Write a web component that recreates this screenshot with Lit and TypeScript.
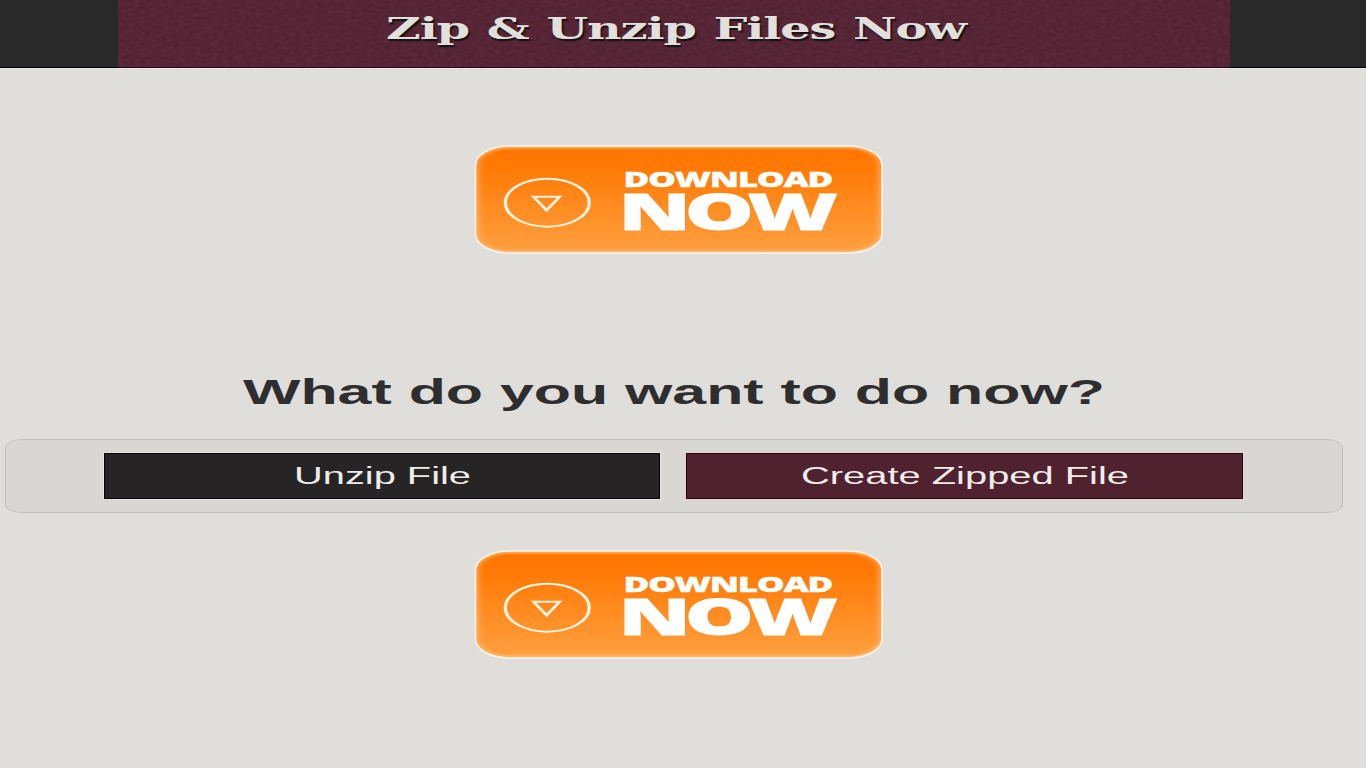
import { css, html, LitElement, svg } from 'lit';
import { customElement, property } from 'lit/decorators.js';

/**
 * Line of text stretched to a fixed width.
 */
@customElement('wide-text')
export class WideText extends LitElement {
  static styles = css`
    :host {
      display: block;
    }

    svg {
      display: block;
      overflow: visible;
    }

    text {
      fill: currentColor;
    }
  `;

  @property() text = '';
  @property({ type: Number }) width = 100;
  @property({ type: Number }) height = 30;
  @property({ type: Number }) baseline = 24;

  render() {
    return html`
      <svg width=${this.width} height=${this.height}>
        ${svg`<text x="0" y=${this.baseline} textLength=${this.width} lengthAdjust="spacingAndGlyphs">${this.text}</text>`}
      </svg>
    `;
  }
}

@customElement('download-button')
export class DownloadButton extends LitElement {
  static styles = css`
    :host {
      display: block;
      width: 410px;
      height: 109px;
      cursor: pointer;
    }

    svg {
      display: block;
    }

    text {
      font-family: 'Open Sans', sans-serif;
      font-weight: 800;
      fill: #fff;
      stroke: #fff;
      stroke-width: 0.3px;
    }

    .small {
      font-size: 20.5px;
      letter-spacing: -0.8px;
    }

    .big {
      font-size: 49px;
      letter-spacing: -3.5px;
      stroke-width: 0.8px;
    }
  `;

  render() {
    return html`
      <svg width="410" height="109" viewBox="0 0 410 109" role="img" aria-label="Download now">
        <defs>
          <linearGradient id="face" x1="0" y1="0" x2="0" y2="1">
            <stop offset="0" stop-color="#ff7400" />
            <stop offset="0.2" stop-color="#ff7a05" />
            <stop offset="1" stop-color="#ffa040" />
          </linearGradient>
          <filter id="soft" x="-5%" y="-10%" width="110%" height="120%">
            <feGaussianBlur stdDeviation="3 1.6" />
          </filter>
          <clipPath id="shape">
            <rect x="1.5" y="1" width="406.5" height="107" rx="34" ry="19" />
          </clipPath>
        </defs>
        <rect x="1.5" y="1" width="406.5" height="107" rx="34" ry="19" fill="url(#face)" />
        <g clip-path="url(#shape)">
          <rect x="1.5" y="1" width="406.5" height="107" rx="34" ry="19" fill="none" stroke="#ffc48c" stroke-width="4" filter="url(#soft)" />
        </g>
        <rect x="1.5" y="1" width="406.5" height="107" rx="34" ry="19" fill="none" stroke="#fff6e8" stroke-width="1.6" />
        <g transform="translate(73.3 57.7) scale(1.75 1)" fill="none" stroke="#fff3e0" stroke-width="1.9">
          <circle r="24" />
          <path d="M-7.9 -6H7.1L-0.4 7.6Z" />
        </g>
        <text class="small" x="149.5" y="42" textLength="208.5" lengthAdjust="spacingAndGlyphs">DOWNLOAD</text>
        <text class="big" x="144.5" y="85" textLength="213" lengthAdjust="spacingAndGlyphs">NOW</text>
      </svg>
    `;
  }
}

@customElement('app-root')
export class AppRoot extends LitElement {
  static styles = css`
    * {
      box-sizing: border-box;
    }

    :host {
      display: flex;
      flex-direction: column;
      height: 768px;
      overflow: hidden;
      background: #dfdedb;
      font-family: 'Liberation Sans', Arial, sans-serif;
    }

    header {
      display: grid;
      grid-template-columns: 118px 1112px 1fr;
      height: 69px;
      flex: none;
      background: #292929;
      border-bottom: 1px solid #e9e8e5;
    }

    .banner {
      display: grid;
      grid-column: 2;
      grid-row: 1;
      height: 68px;
      background: #552536;
      border-bottom: 1px solid #2a0815;
    }

    .grain,
    .title {
      grid-area: 1 / 1;
    }

    .grain {
      width: 1112px;
      height: 67px;
      opacity: 0.09;
    }

    .edge {
      grid-row: 1;
      border-bottom: 1px solid #000;
    }

    .title {
      margin: 0;
      padding: 8px 0 0 268px;
      font: bold 29.5px 'DejaVu Serif', serif;
      letter-spacing: -0.7px;
      word-spacing: 1.5px;
      color: #e2e0dd;
      text-shadow: 1px 2px 1px #111;
      z-index: 1;
    }

    main {
      display: flex;
      flex-direction: column;
      align-items: flex-start;
    }

    download-button {
      margin-left: 474px;
    }

    .first {
      margin-top: 76px;
    }

    h2 {
      margin: 116px 0 0 243px;
      font-size: 34.5px;
      font-weight: bold;
      color: #2e2e2f;
    }

    .panel {
      display: flex;
      gap: 26px;
      width: 1338px;
      height: 74px;
      margin: 29px 0 37px 5px;
      padding: 13px 98px;
      background: #d8d7d3;
      border: 1px solid #bfbebb;
      border-radius: 17px / 9px;
    }

    button {
      display: flex;
      justify-content: center;
      width: 556.4px;
      height: 46px;
      flex: none;
      padding: 9px 0 0;
      border: 1px solid #050505;
      font: 23.5px 'Liberation Sans', Arial, sans-serif;
      color: #eeedea;
      background: #262425;
      box-shadow: 0 0 0 1px #e8e5e2;
    }

    button + button {
      border-color: #2b0713;
      background: #502230;
      box-shadow: 0 0 0 1px #e4d2d3;
    }
  `;

  render() {
    return html`
      <header>
        <div class="edge"></div>
        <div class="banner">
          <svg class="grain" aria-hidden="true">
            <filter id="noise" color-interpolation-filters="sRGB">
              <feTurbulence type="fractalNoise" baseFrequency="0.18 0.3" numOctaves="2" seed="4" />
              <feColorMatrix values="0.7 0 0 0 0.03  0.7 0 0 0 -0.18  0.7 0 0 0 -0.12  0 0 0 0 1" />
            </filter>
            <rect width="100%" height="67" filter="url(#noise)" />
          </svg>
          <h1 class="title">
            <wide-text text="Zip &amp; Unzip Files Now" width="580" height="40" baseline="31"></wide-text>
          </h1>
        </div>
        <div class="edge"></div>
      </header>
      <main>
        <download-button class="first"></download-button>
        <h2>
          <wide-text text="What do you want to do now?" width="862" height="40" baseline="34"></wide-text>
        </h2>
        <div class="panel">
          <button>
            <wide-text text="Unzip File" width="177" height="24" baseline="21"></wide-text>
          </button>
          <button>
            <wide-text text="Create Zipped File" width="328" height="24" baseline="21"></wide-text>
          </button>
        </div>
        <download-button></download-button>
      </main>
    `;
  }
}
